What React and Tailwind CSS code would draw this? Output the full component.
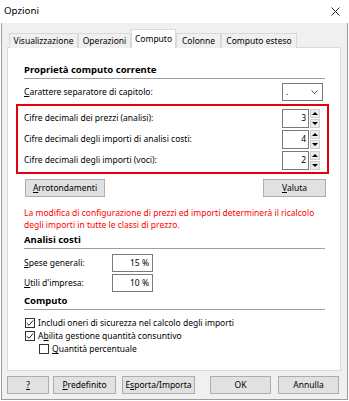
import React from "react";

// small helpers for the Windows-style dialog
const U = ({ children }) => <span className="underline underline-offset-[1px]">{children}</span>;

function Btn({ children, className = "" }) {
  return (
    <div className={`flex h-[18px] items-center justify-center border border-[#adadad] bg-[#e1e1e1] ${className}`}>
      {children}
    </div>
  );
}

function Header({ title }) {
  return (
    <div>
      <div className="text-[9.5px] font-bold leading-[16px]">{title}</div>
      <div className="h-px bg-[#a0a0a0]" />
    </div>
  );
}

function Spin({ value }) {
  return (
    <div className="flex h-[19px]">
      <div className="flex w-[27px] items-center justify-end border border-[#7a7a7a] bg-white pr-[2px]">
        {value}
      </div>
      <div className="ml-px flex w-[10px] flex-col gap-px">
        <div className="flex flex-1 items-center justify-center border border-[#cfcfcf] bg-[#ebebeb]">
          <span className="h-0 w-0 border-x-[3px] border-b-[3px] border-x-transparent border-b-black" />
        </div>
        <div className="flex flex-1 items-center justify-center border border-[#cfcfcf] bg-[#ebebeb]">
          <span className="h-0 w-0 border-x-[3px] border-t-[3px] border-x-transparent border-t-black" />
        </div>
      </div>
    </div>
  );
}

function Check({ checked }) {
  return (
    <span className="flex h-[10px] w-[10px] shrink-0 items-center justify-center border border-[#333333] bg-white">
      {checked && (
        <svg width="8" height="8" viewBox="0 0 8 8">
          <path d="M0.8 4.2 L3 6.3 L7.2 1.4" fill="none" stroke="#222" strokeWidth="1" />
        </svg>
      )}
    </span>
  );
}

const tabs = [
  { label: "Visualizzazione", w: "w-[69px]" },
  { label: "Operazioni", w: "w-[53px]" },
  { label: "Computo", w: "w-[45px]", active: true },
  { label: "Colonne", w: "w-[45px]" },
  { label: "Computo esteso", w: "w-[76px]" },
];

export default function App() {
  return (
    <div className="h-[401px] w-[349px] overflow-hidden bg-white font-['Noto_Sans',sans-serif] text-[8.5px] text-black">
      {/* title bar */}
      <div className="flex h-[23px] items-center justify-between pl-[4px] pr-[9px]">
        <span className="text-[9.75px]">Opzioni</span>
        <svg width="9" height="9" viewBox="0 0 9 9">
          <path d="M0.5 0.5 L8.5 8.5 M8.5 0.5 L0.5 8.5" stroke="#222" strokeWidth="1" />
        </svg>
      </div>

      <div className="ml-px h-[377px] w-[347px] border-x border-b border-[#9c9c9c] bg-[#f0f0f0] pl-[5px] pt-[6px]">
        {/* tabs */}
        <div className="relative z-10 -mb-px flex h-[19px] items-end pl-[2px]">
          {tabs.map((t) => (
            <div
              key={t.label}
              className={`${t.w} flex items-center justify-center border border-b-0 border-[#d9d9d9] ${
                t.active ? "h-[19px] bg-white" : "h-[15px] bg-[#f0f0f0]"
              }`}
            >
              {t.label}
            </div>
          ))}
        </div>

        {/* panel */}
        <div className="h-[324px] w-[334px] border border-[#d9d9d9] bg-white pl-[16px] pr-[15px] pt-[14px]">
          <Header title="Proprietà computo corrente" />

          <div className="mt-[4px] flex h-[18px] items-center justify-between">
            <span>
              <U>C</U>arattere separatore di capitolo:
            </span>
            <div className="mr-[2px] flex h-[18px] w-[41px] items-center justify-between border border-[#7a7a7a] bg-white pl-[3px] pr-[4px]">
              <span>.</span>
              <svg width="7" height="4" viewBox="0 0 7 4">
                <path d="M0.5 0.5 L3.5 3.5 L6.5 0.5" fill="none" stroke="#444" strokeWidth="0.9" />
              </svg>
            </div>
          </div>

          <div className="-ml-[8px] -mr-[4px] mt-[3px] flex flex-col gap-[2px] border-2 border-[#e3000f] pb-[2px] pl-[6px] pr-[7px] pt-[3px]">
            {[
              ["Cifre decimali dei prezzi (analisi):", "3"],
              ["Cifre decimali degli importi di analisi costi:", "4"],
              ["Cifre decimali degli importi (voci):", "2"],
            ].map(([label, v]) => (
              <div key={label} className="flex h-[19px] items-center justify-between">
                <span>{label}</span>
                <Spin value={v} />
              </div>
            ))}
          </div>

          <div className="ml-px mt-[5px] flex justify-between">
            <Btn className="w-[80px]">
              <span>
                <U>A</U>rrotondamenti
              </span>
            </Btn>
            <Btn className="-mr-px w-[63px]">
              <span>
                <U>V</U>aluta
              </span>
            </Btn>
          </div>

          <div className="mt-[10px] whitespace-nowrap leading-[12px] text-[#ff0000]">
            La modifica di configurazione di prezzi ed importi determinerà il ricalcolo
            <br />
            degli importi in tutte le classi di prezzo.
          </div>

          <div className="mt-px">
            <Header title="Analisi costi" />
          </div>

          <div className="mt-[5px] flex h-[18px] items-center">
            <span className="w-[88px]">
              <U>S</U>pese generali:
            </span>
            <div className="flex h-[18px] w-[41px] items-center justify-end border border-[#7a7a7a] bg-white pr-[3px]">
              15 %
            </div>
          </div>
          <div className="mt-[2px] flex h-[18px] items-center">
            <span className="w-[88px]">
              <U>U</U>tili d'impresa:
            </span>
            <div className="flex h-[18px] w-[41px] items-center justify-end border border-[#7a7a7a] bg-white pr-[3px]">
              10 %
            </div>
          </div>

          <div className="mt-px">
            <Header title="Computo" />
          </div>

          <div className="mt-[6px] flex flex-col leading-[13px]">
            <div className="ml-px flex h-[13px] items-center gap-[3px]">
              <Check checked />
              <span>Includi oneri di sicurezza nel calcolo degli importi</span>
            </div>
            <div className="ml-px flex h-[13px] items-center gap-[3px]">
              <Check checked />
              <span>
                A<U>b</U>ilita gestione quantità consuntivo
              </span>
            </div>
            <div className="ml-[15px] flex h-[13px] items-center gap-[3px]">
              <Check />
              <span>
                <U>Q</U>uantità percentuale
              </span>
            </div>
          </div>
        </div>

        {/* footer buttons */}
        <div className="mt-[5px] flex">
          <Btn className="w-[42px]">
            <U>?</U>
          </Btn>
          <Btn className="ml-[4px] w-[63px]">
            <span>
              <U>P</U>redefinito
            </span>
          </Btn>
          <Btn className="ml-[6px] w-[73px]">
            <span>
              E<U>s</U>porta/Importa
            </span>
          </Btn>
          <Btn className="ml-[15px] w-[61px] border-[#0078d7]">OK</Btn>
          <Btn className="ml-[7px] w-[61px]">Annulla</Btn>
        </div>
      </div>
    </div>
  );
}
